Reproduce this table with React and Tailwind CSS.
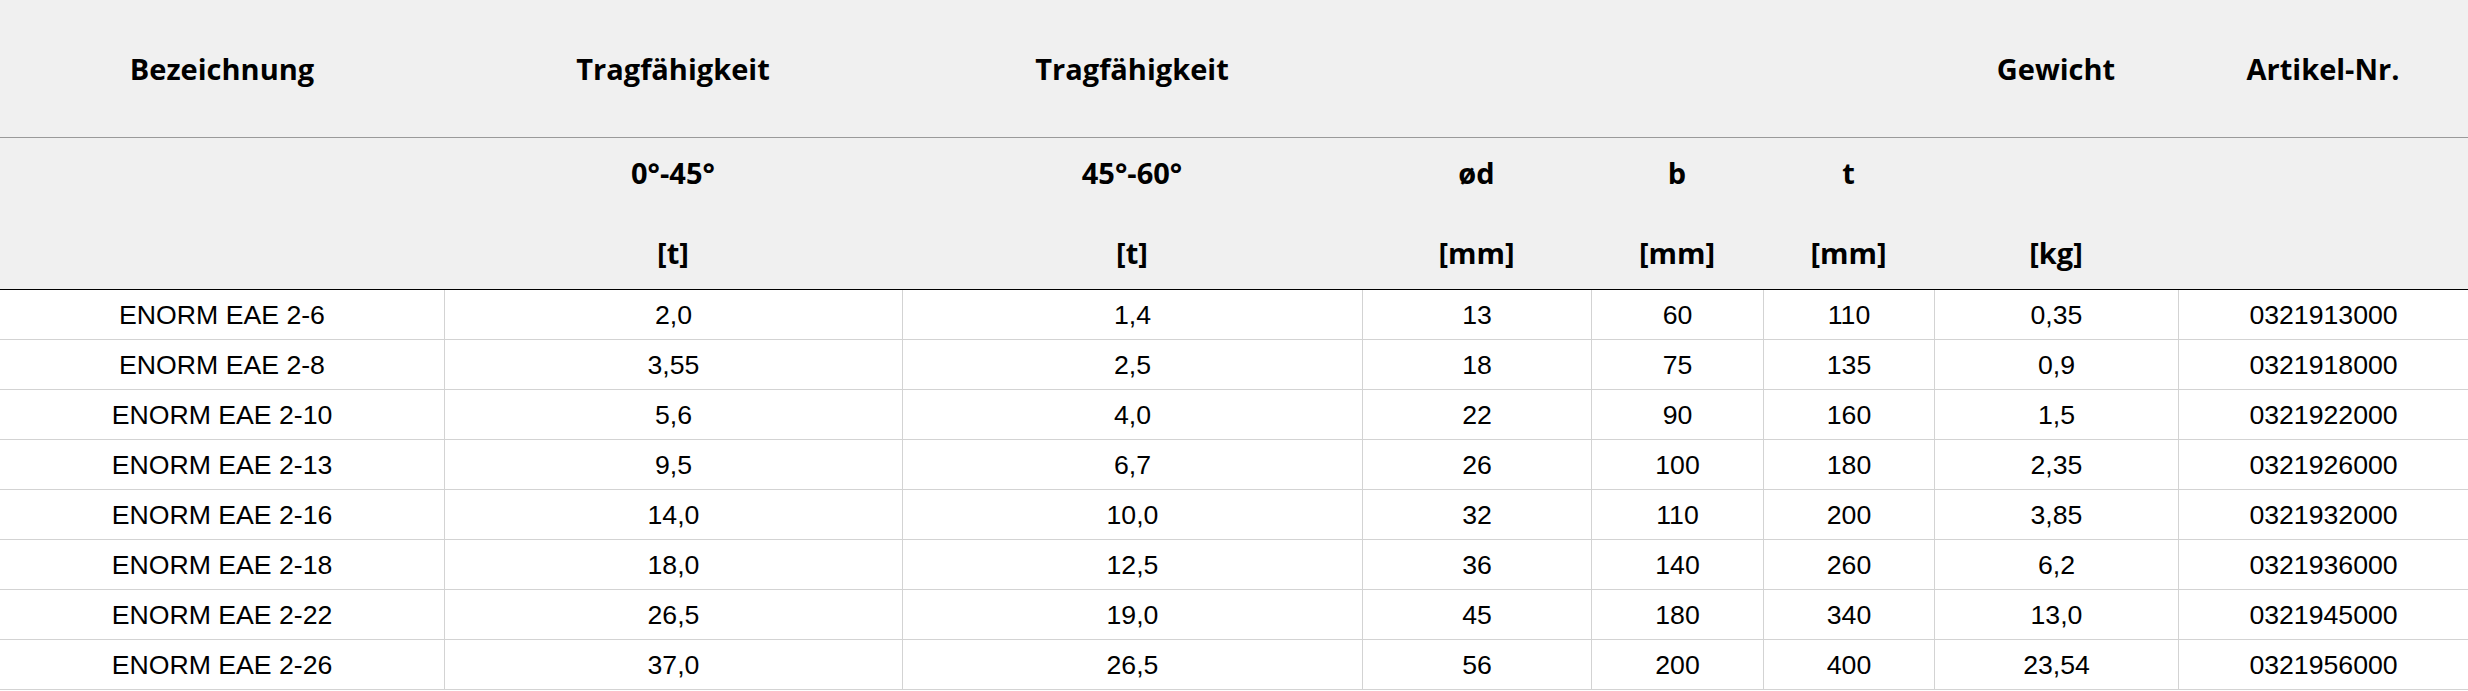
import React from "react";

const COLS = "grid grid-cols-[444px_458px_460px_229px_172px_171px_244px_290px]";

const rows = [
  ["ENORM EAE 2-6", "2,0", "1,4", "13", "60", "110", "0,35", "0321913000"],
  ["ENORM EAE 2-8", "3,55", "2,5", "18", "75", "135", "0,9", "0321918000"],
  ["ENORM EAE 2-10", "5,6", "4,0", "22", "90", "160", "1,5", "0321922000"],
  ["ENORM EAE 2-13", "9,5", "6,7", "26", "100", "180", "2,35", "0321926000"],
  ["ENORM EAE 2-16", "14,0", "10,0", "32", "110", "200", "3,85", "0321932000"],
  ["ENORM EAE 2-18", "18,0", "12,5", "36", "140", "260", "6,2", "0321936000"],
  ["ENORM EAE 2-22", "26,5", "19,0", "45", "180", "340", "13,0", "0321945000"],
  ["ENORM EAE 2-26", "37,0", "26,5", "56", "200", "400", "23,54", "0321956000"],
];

const head1 = ["Bezeichnung", "Tragfähigkeit", "Tragfähigkeit", "", "", "", "Gewicht", "Artikel-Nr."];
const head2 = [
  ["", ""],
  ["0°-45°", "[t]"],
  ["45°-60°", "[t]"],
  ["ød", "[mm]"],
  ["b", "[mm]"],
  ["t", "[mm]"],
  ["", "[kg]"],
  ["", ""],
];

export default function App() {
  return (
    <div className="w-[2468px] h-[691px] bg-white text-black">
      <div className="bg-[#f0f0f0] font-['Open_Sans',sans-serif] font-bold text-[29px] text-black">
        <div className={`${COLS} h-[138px] items-center border-b border-[#9a9a9a]`}>
          {head1.map((h, i) => (
            <div key={i} className="text-center leading-[40px]">
              {h}
            </div>
          ))}
        </div>
        <div className={`${COLS} h-[152px] border-b border-black`}>
          {head2.map(([a, b], i) => (
            <div key={i} className="flex flex-col items-center pt-[15px] gap-[40px] leading-[40px]">
              <div className="h-[40px]">{a}</div>
              <div className="h-[40px]">{b}</div>
            </div>
          ))}
        </div>
      </div>
      <div className="font-['Liberation_Sans',Arial,sans-serif] text-[26.67px]">
        {rows.map((r, ri) => (
          <div key={ri} className={`${COLS} h-[50px] border-b border-[#d3d3d3]`}>
            {r.map((c, ci) => (
              <div
                key={ci}
                className={`flex items-center justify-center ${ci > 0 ? "border-l border-[#d3d3d3]" : ""}`}
              >
                {c}
              </div>
            ))}
          </div>
        ))}
      </div>
    </div>
  );
}
